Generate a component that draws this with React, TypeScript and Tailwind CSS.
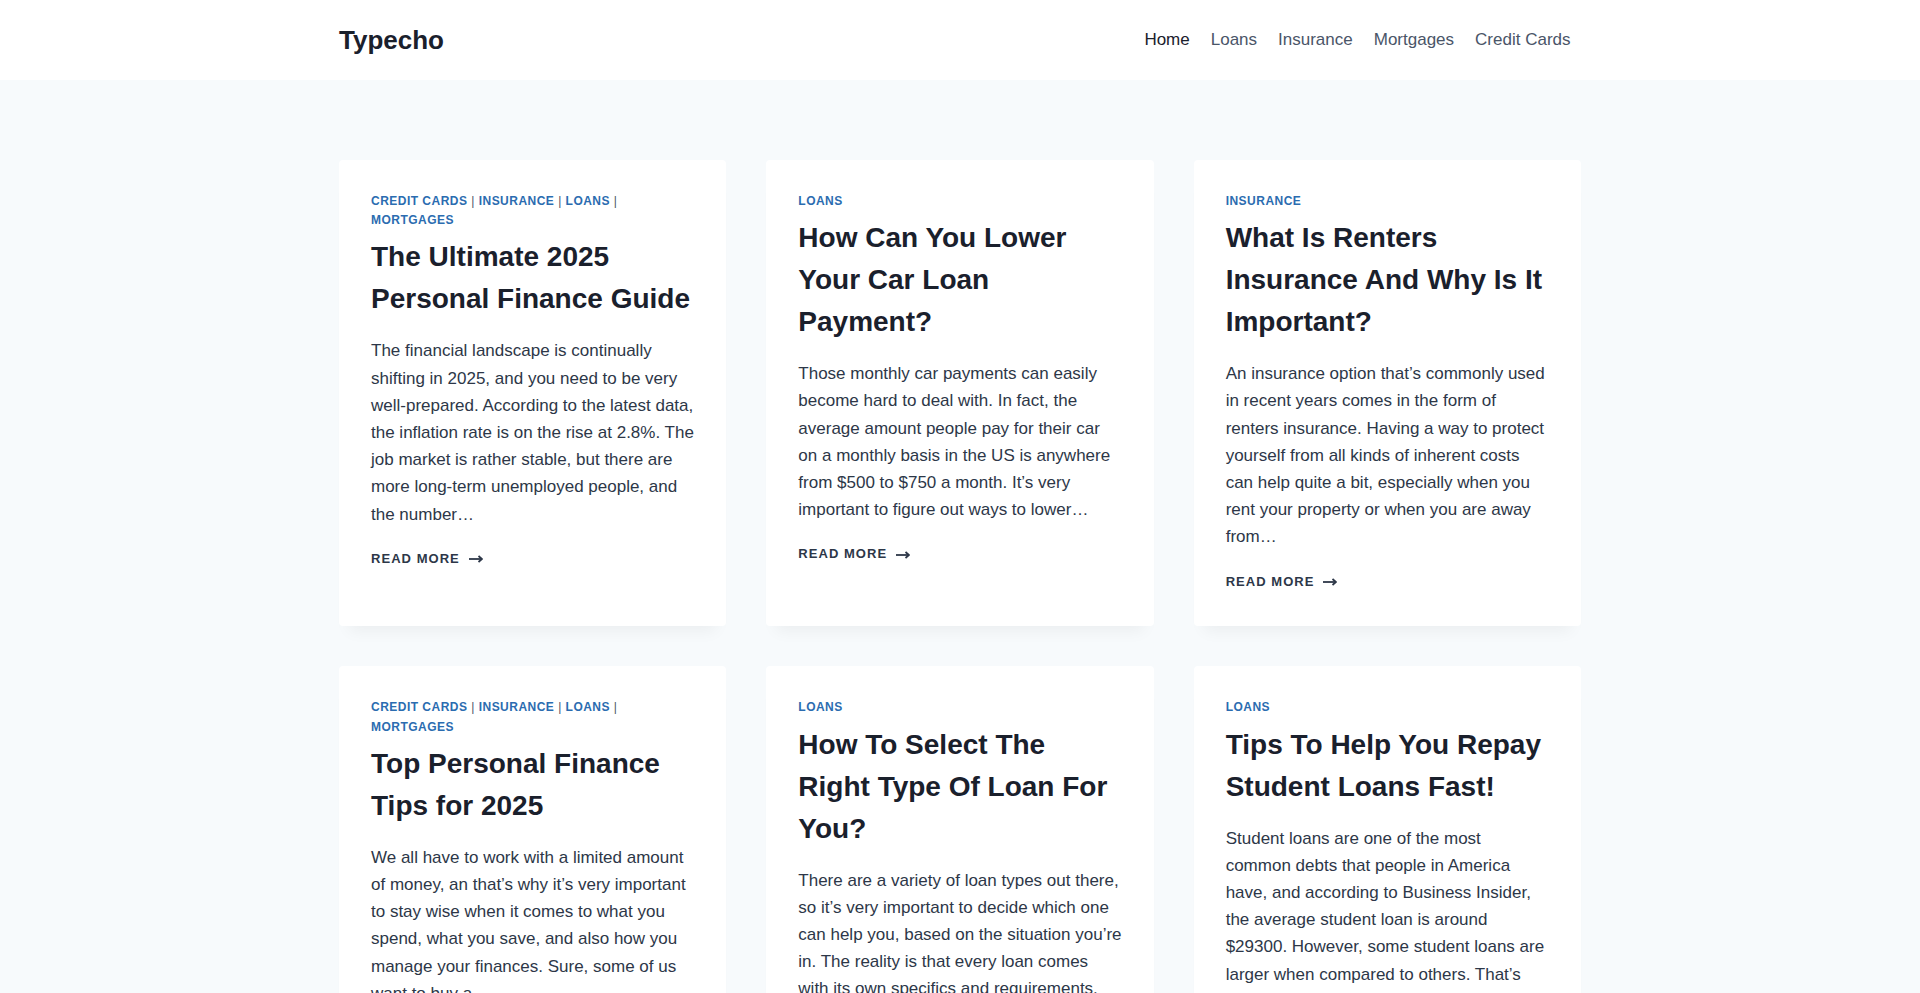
import React from "react";

type Post = {
  cats: string[];
  title: string;
  excerpt: string;
};

const posts: Post[] = [
  {
    cats: ["Credit Cards", "Insurance", "Loans", "Mortgages"],
    title: "The Ultimate 2025 Personal Finance Guide",
    excerpt:
      "The financial landscape is continually shifting in 2025, and you need to be very well-prepared. According to the latest data, the inflation rate is on the rise at 2.8%. The job market is rather stable, but there are more long-term unemployed people, and the number…",
  },
  {
    cats: ["Loans"],
    title: "How Can You Lower Your Car Loan Payment?",
    excerpt:
      "Those monthly car payments can easily become hard to deal with. In fact, the average amount people pay for their car on a monthly basis in the US is anywhere from $500 to $750 a month. It’s very important to figure out ways to lower…",
  },
  {
    cats: ["Insurance"],
    title: "What Is Renters Insurance And Why Is It Important?",
    excerpt:
      "An insurance option that’s commonly used in recent years comes in the form of renters insurance. Having a way to protect yourself from all kinds of inherent costs can help quite a bit, especially when you rent your property or when you are away from…",
  },
  {
    cats: ["Credit Cards", "Insurance", "Loans", "Mortgages"],
    title: "Top Personal Finance Tips for 2025",
    excerpt:
      "We all have to work with a limited amount of money, an that’s why it’s very important to stay wise when it comes to what you spend, what you save, and also how you manage your finances. Sure, some of us want to buy a…",
  },
  {
    cats: ["Loans"],
    title: "How To Select The Right Type Of Loan For You?",
    excerpt:
      "There are a variety of loan types out there, so it’s very important to decide which one can help you, based on the situation you’re in. The reality is that every loan comes with its own specifics and requirements. That’s why you…",
  },
  {
    cats: ["Loans"],
    title: "Tips To Help You Repay Student Loans Fast!",
    excerpt:
      "Student loans are one of the most common debts that people in America have, and according to Business Insider, the average student loan is around $29300. However, some student loans are larger when compared to others. That’s why it’s important…",
  },
];

const navItems = ["Home", "Loans", "Insurance", "Mortgages", "Credit Cards"];

const Arrow = () => (
  <svg width="14" height="8" viewBox="0 0 14 8" className="ml-[9px]">
    <path d="M0 4h12.5" stroke="#2d3748" strokeWidth="1.8" />
    <path d="M9.5 1L13 4L9.5 7" fill="none" stroke="#2d3748" strokeWidth="1.8" />
  </svg>
);

const Card = ({ post }: { post: Post }) => {
  return (
    <article className="bg-white rounded-[4px] shadow-[0_15px_15px_-10px_rgba(0,0,0,0.05)] px-8 pt-8 pb-[34px] flex flex-col">
      <div className="text-[12px] leading-[19.2px] font-bold uppercase tracking-[0.04em] text-[#4a5568]">
        {post.cats.map((c, i) => (
          <React.Fragment key={c}>
            <a className="text-[#2b6cb0]">{c}</a>
            {i < post.cats.length - 1 && <span className="font-normal"> | </span>}
          </React.Fragment>
        ))}
      </div>
      <h2 className="mt-[6px] text-[28px] leading-[42px] font-bold text-[#1a202c]">
        {post.title}
      </h2>
      <p className="mt-[17px] text-[17px] leading-[27.2px] text-[#2d3748]">
        {post.excerpt}
      </p>
      <a className="mt-[21px] flex items-center text-[13px] leading-[20.8px] font-bold uppercase tracking-[0.08em] text-[#2d3748]">
        Read More
        <Arrow />
      </a>
    </article>
  );
};

const App = () => {
  return (
    <div className="min-h-screen bg-[#f7fafc] font-['Liberation_Sans',Arial,sans-serif]">
      <header className="bg-white h-[80px]">
        <div className="max-w-[1290px] mx-auto px-6 h-full flex items-center justify-between">
          <div className="text-[26px] font-bold text-[#1a202c]">Typecho</div>
          <nav className="flex">
            {navItems.map((n, i) => (
              <a
                key={n}
                className={
                  "px-[10.5px] text-[17px] " +
                  (i === 0 ? "text-[#1a202c]" : "text-[#4a5568]")
                }
              >
                {n}
              </a>
            ))}
          </nav>
        </div>
      </header>
      <main className="max-w-[1290px] mx-auto px-6 pt-[80px] pb-20">
        <div className="grid grid-cols-3 gap-10">
          {posts.map((p) => (
            <Card key={p.title} post={p} />
          ))}
        </div>
      </main>
    </div>
  );
};

export default App;
